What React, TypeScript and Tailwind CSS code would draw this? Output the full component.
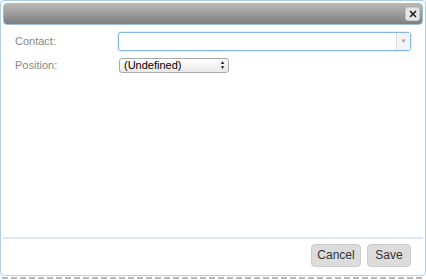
import { X } from "lucide-react";

export default function App() {
  return (
    <div className="h-[280px] w-[426px] bg-white font-['Liberation_Sans',Arial,sans-serif] text-[11px]">
      <div className="flex h-[276px] flex-col rounded-[4px] border border-[#aed0ea] bg-white p-[2px]">
        <div className="flex h-[22px] items-center justify-end rounded-[4px] border border-[#9fbfd9] bg-gradient-to-b from-[#b8b8b8] to-[#7e7e7e] pr-[2px]">
          <div className="flex h-[14px] w-[15px] items-center justify-center rounded-[3px] border border-[#c8c8c8] bg-[#e6e6e6]">
            <X className="h-[10px] w-[10px] text-[#222]" strokeWidth={4} />
          </div>
        </div>
        <div className="flex-1 px-[12px] pt-[7px] text-[#888]">
          <div className="flex items-center">
            <span className="w-[103px]">Contact:</span>
            <div className="flex h-[19px] w-[293px] rounded-[3px] border border-[#85b4e8] bg-white shadow-[0_0_2px_rgba(100,150,220,0.5)]">
              <div className="flex-1" />
              <div className="flex w-[14px] items-center justify-center border-l border-[#ddd] bg-[#f4f4f4] text-[6px] text-[#999]">▼</div>
            </div>
          </div>
          <div className="mt-[6px] flex items-center">
            <span className="w-[104px]">Position:</span>
            <div className="flex h-[15px] w-[110px] items-center justify-between rounded-[3px] border border-[#aaa] bg-gradient-to-b from-white to-[#e8e8e8] pl-[4px] pr-[3px] text-[11px] text-black">
              <span>(Undefined)</span>
              <span className="flex flex-col text-[5px] leading-[5px]">
                <span>▲</span>
                <span>▼</span>
              </span>
            </div>
          </div>
        </div>
        <div className="flex h-[36px] items-center justify-end gap-[6px] border-t-2 border-[#dde8f2] pb-[2px] pr-[12px] text-[12px] text-[#333]">
          <button className="h-[23px] w-[50px] rounded-[4px] border border-[#ccc] bg-[#dcdcdc]">Cancel</button>
          <button className="h-[23px] w-[44px] rounded-[4px] border border-[#ccc] bg-[#dcdcdc]">Save</button>
        </div>
      </div>
      <div className="mx-[2px] mt-[1px] h-[2px] bg-[repeating-linear-gradient(90deg,#888_0_6px,transparent_6px_9px)] opacity-60" />
    </div>
  );
}
